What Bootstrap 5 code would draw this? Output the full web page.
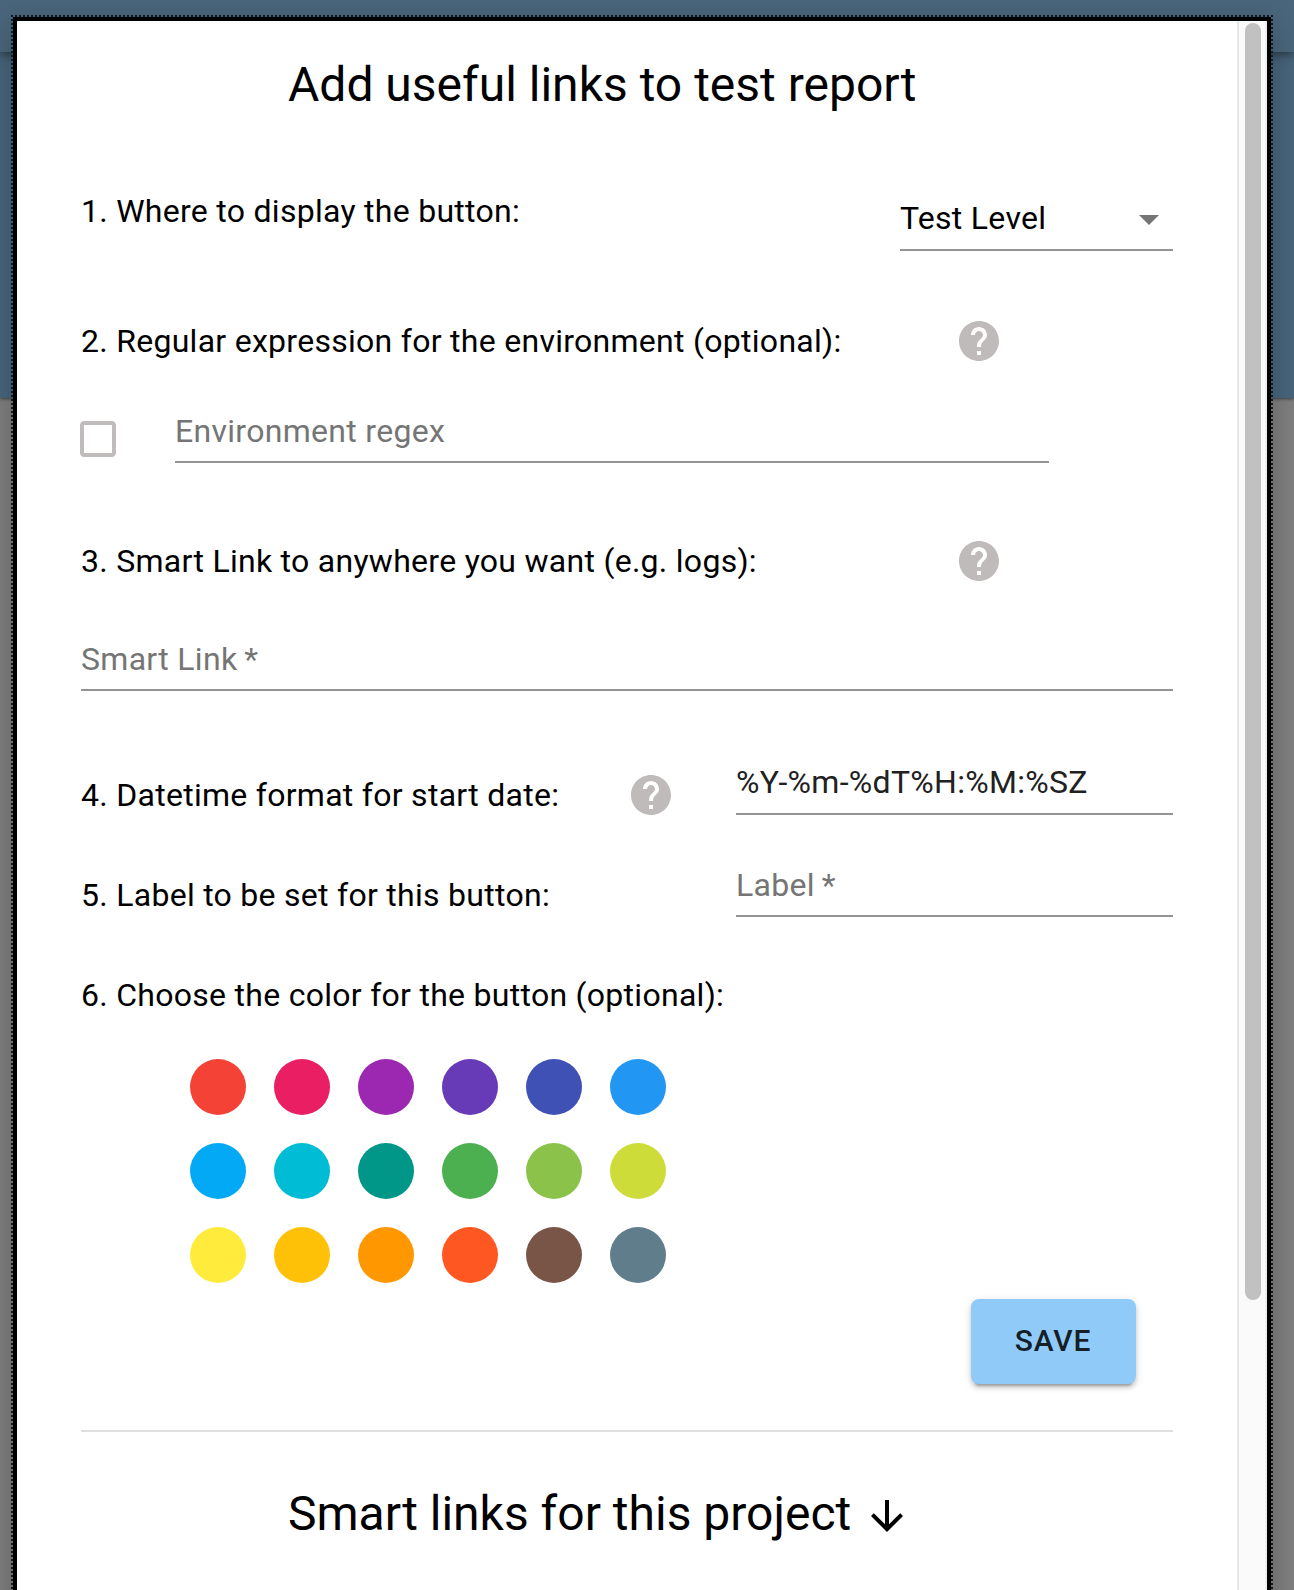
<!DOCTYPE html>
<html lang="en">
<head>
<meta charset="utf-8">
<title>Smart links</title>
<link href="https://cdn.jsdelivr.net/npm/bootstrap@5.3.0/dist/css/bootstrap.min.css" rel="stylesheet">
<style>
body{font-family:Roboto,"Liberation Sans",sans-serif;font-size:32px;line-height:48px;letter-spacing:.28px;color:#000;background:#7f7f7f;height:1590px;overflow:hidden}
.backdrop-bar{height:52px;background:#4a667c;box-shadow:0 2px 10px rgba(0,0,0,.5);position:relative}
.backdrop-panel{height:346px;background:#48657c;box-shadow:0 1px 3px rgba(0,0,0,.5)}
.dialog-frame{position:absolute;left:13px;top:17px;width:1258px;height:1640px;background:#fff;border:4px solid #000;box-shadow:0 8px 30px rgba(0,0,0,.25)}
.dots-x,.dots-y{position:absolute}
.dots-x{left:-6px;right:-6px;top:-6px;height:2px;background:repeating-linear-gradient(90deg,#111a20 0 2px,transparent 2px 4px)}
.dots-y{top:-6px;bottom:0;width:2px;background:repeating-linear-gradient(180deg,#111a20 0 2px,transparent 2px 4px)}
.dots-l{left:-6px}.dots-r{right:-6px}
.pane{padding:32px 64px 0}
.scroll-track{width:30px;background:#fafafa;border-left:2px solid #e7e7e7;border-right:2px solid #efefef;padding:2px 4px 0 6px}
.scroll-thumb{width:16px;height:1277px;border-radius:8px;background:#c1c1c1}
h2{font-size:48px;line-height:64px;letter-spacing:0;margin:0 0 0 207px;font-weight:400}
.field{height:48px;line-height:32px;border:0;border-bottom:2px solid #949494;border-radius:0;padding:0 0 14px;font-size:32px;letter-spacing:.3px;color:#757575;background:none;outline:0}
.field::placeholder{color:#757575;opacity:1}
.w-half{width:437px}
.picker{width:273px;height:64px;line-height:48px;border-bottom:2px solid #949494;padding:7px 0 0;letter-spacing:.28px}
svg{display:block;width:48px;height:48px;flex:none}
.help{fill:#bfbbbb}
.swatches{display:grid;grid-template-columns:repeat(6,56px);gap:28px;margin:40px 0 0 109px}
.swatches span{height:56px;border-radius:50%}
.btn-save{width:165px;height:85px;background:#90caf9;color:rgba(0,0,0,.87);font-size:30px;font-weight:500;letter-spacing:.8px;border-radius:8px;border:0;padding:0 1px 2px 0;margin:16px 37px 0 0;box-shadow:0 6px 2px -4px rgba(0,0,0,.2),0 4px 4px rgba(0,0,0,.14),0 2px 10px rgba(0,0,0,.12)}
.rule{height:2px;background:#e0e0e0;margin:46px 0 50px}
.r1{margin-top:70px}.r2{margin-top:66px}.r3{margin-top:50px}.r4{margin-top:74px}.r5{margin-top:58px}
.r6{margin-top:76px;height:52px}.r7{margin-top:50px;height:50px}.r8{margin-top:52px}
.help-a{margin-right:170px}.help-b{margin-right:61px}
.check{margin-left:-7px;margin-right:53px}
.env{width:874px}
.fmt{color:#212121;padding-bottom:16px}
.caret{margin-top:1px}
.down{margin:10px 0 0 12px}
</style>
<script src="https://cdn.jsdelivr.net/npm/bootstrap@5.3.0/dist/js/bootstrap.bundle.min.js"></script>
</head>
<body>
<svg class="d-none"><symbol id="help" viewBox="0 0 24 24"><path d="M12 2C6.48 2 2 6.48 2 12s4.48 10 10 10 10-4.48 10-10S17.52 2 12 2zm1 17h-2v-2h2v2zm2.07-7.75l-.9.92C13.45 12.9 13 13.5 13 15h-2v-.5c0-1.1.45-2.1 1.17-2.83l1.24-1.26c.37-.36.59-.86.59-1.41 0-1.1-.9-2-2-2s-2 .9-2 2H8c0-2.21 1.79-4 4-4s4 1.79 4 4c0 .88-.36 1.68-.93 2.25z"/></symbol></svg>
<div class="backdrop-bar"></div>
<div class="backdrop-panel"></div>
<div class="dialog-frame d-flex">
  <div class="dots-x"></div><div class="dots-y dots-l"></div><div class="dots-y dots-r"></div>
  <main class="pane flex-grow-1">
    <h2>Add useful links to test report</h2>
    <div class="r1 d-flex justify-content-between align-items-start">
      <div>1. Where to display the button:</div>
      <div class="picker d-flex justify-content-between"><span>Test Level</span><svg class="caret" viewBox="0 0 24 24" fill="#757575"><path d="M7 10l5 5 5-5z"/></svg></div>
    </div>
    <div class="r2 d-flex justify-content-between"><div>2. Regular expression for the environment (optional):</div><svg class="help help-a"><use href="#help"/></svg></div>
    <div class="r3 d-flex">
      <svg class="check" viewBox="0 0 24 24" fill="#c1bcbc"><path d="M19 5v14H5V5h14m0-2H5c-1.1 0-2 .9-2 2v14c0 1.1.9 2 2 2h14c1.1 0 2-.9 2-2V5c0-1.1-.9-2-2-2z"/></svg>
      <input class="field env" placeholder="Environment regex">
    </div>
    <div class="r4 d-flex justify-content-between"><div>3. Smart Link to anywhere you want (e.g. logs):</div><svg class="help help-a"><use href="#help"/></svg></div>
    <div class="r5 d-flex"><input class="field w-100" placeholder="Smart Link&#8201;*"></div>
    <div class="r6 d-flex align-items-end">
      <div class="flex-grow-1">4. Datetime format for start date:</div><svg class="help help-b"><use href="#help"/></svg>
      <input class="field w-half fmt align-self-start" value="%Y-%m-%dT%H:%M:%SZ">
    </div>
    <div class="r7 d-flex justify-content-between align-items-end"><div>5. Label to be set for this button:</div><input class="field w-half align-self-start" placeholder="Label&#8201;*"></div>
    <div class="r8">6. Choose the color for the button (optional):</div>
    <div class="swatches">
      <span style="background:#f44336"></span><span style="background:#e91e63"></span><span style="background:#9c27b0"></span><span style="background:#673ab7"></span><span style="background:#3f51b5"></span><span style="background:#2196f3"></span>
      <span style="background:#03a9f4"></span><span style="background:#00bcd4"></span><span style="background:#009688"></span><span style="background:#4caf50"></span><span style="background:#8bc34a"></span><span style="background:#cddc39"></span>
      <span style="background:#ffeb3b"></span><span style="background:#ffc107"></span><span style="background:#ff9800"></span><span style="background:#ff5722"></span><span style="background:#795548"></span><span style="background:#607d8b"></span>
    </div>
    <div class="d-flex justify-content-end"><button class="btn btn-save">SAVE</button></div>
    <div class="rule"></div>
    <h2 class="d-flex">Smart links for this project<svg class="down" viewBox="0 0 24 24"><path d="M20 12l-1.41-1.41L13 16.17V4h-2v12.17l-5.58-5.59L4 12l8 8 8-8z"/></svg></h2>
  </main>
  <div class="scroll-track"><div class="scroll-thumb"></div></div>
</div>
</body>
</html>
